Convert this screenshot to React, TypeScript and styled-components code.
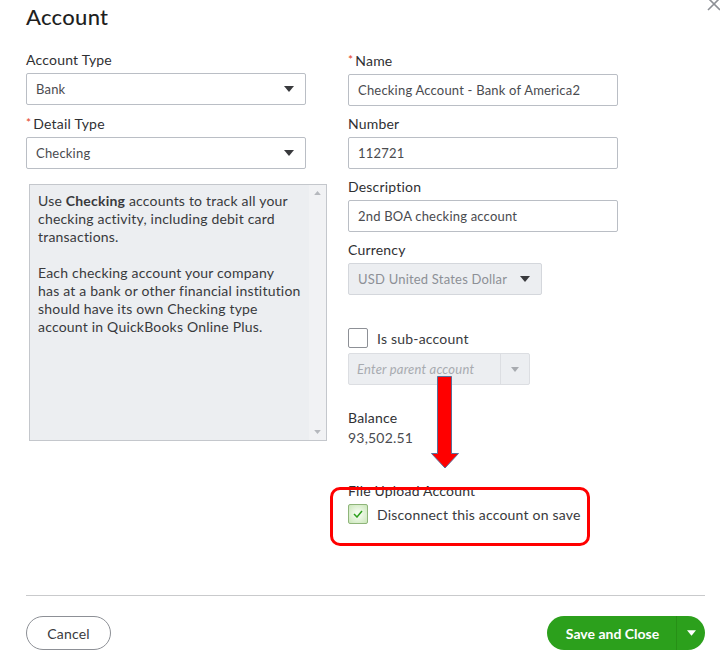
import React from 'react';
import styled, { createGlobalStyle } from 'styled-components';

const GlobalStyle = createGlobalStyle`
  html, body {
    margin: 0;
    padding: 0;
    background: #fff;
  }
  body {
    font-family: Lato, "Open Sans", sans-serif;
    color: #393a3d;
    letter-spacing: 0.2px;
  }
`;

const Caret = ({ color = '#393a3d' }: { color?: string }) => (
  <svg width="10" height="6" viewBox="0 0 10 6">
    <path d="M0 0h10L5 6z" fill={color} />
  </svg>
);

export default function App() {
  return (
    <Dialog>
      <GlobalStyle />
      <Header>
        <Title>Account</Title>
        <CloseButton aria-label="Close">
          <svg width="14" height="14" viewBox="0 0 14 14">
            <path d="M1 1l12 12M13 1L1 13" stroke="#8d9096" strokeWidth="1.6" />
          </svg>
        </CloseButton>
      </Header>

      <Body>
        <Column>
          <Field>
            <Label>Account Type</Label>
            <Select $width={280}>
              <span>Bank</span>
              <Caret />
            </Select>
          </Field>
          <Field>
            <Label>
              <Required>*</Required>Detail Type
            </Label>
            <Select $width={280}>
              <span>Checking</span>
              <Caret />
            </Select>
          </Field>
          <HelpBox>
            <HelpText>
              <p>
                Use <b>Checking</b> accounts to track all your
                <br />
                checking activity, including debit card
                <br />
                transactions.
              </p>
              <p>
                Each checking account your company
                <br />
                has at a bank or other financial institution
                <br />
                should have its own Checking type
                <br />
                account in QuickBooks Online Plus.
              </p>
            </HelpText>
            <ScrollTrack>
              <Caret color="#b5b8bd" />
              <Caret color="#b5b8bd" />
            </ScrollTrack>
          </HelpBox>
        </Column>

        <Column>
          <Field>
            <Label>
              <Required>*</Required>Name
            </Label>
            <TextInput $width={270}>Checking Account - Bank of America2</TextInput>
          </Field>
          <Field>
            <Label>Number</Label>
            <TextInput $width={270}>112721</TextInput>
          </Field>
          <Field>
            <Label>Description</Label>
            <TextInput $width={270}>2nd BOA checking account</TextInput>
          </Field>
          <Field>
            <Label>Currency</Label>
            <Select $width={194} $disabled>
              <span>USD United States Dollar</span>
              <Caret />
            </Select>
          </Field>

          <CheckRow $top={24}>
            <Checkbox />
            <CheckText>Is sub-account</CheckText>
          </CheckRow>
          <Combo>
            <Placeholder>Enter parent account</Placeholder>
            <ComboToggle>
              <Caret color="#a8abb0" />
            </ComboToggle>
          </Combo>

          <Label $top={24}>Balance</Label>
          <Value>93,502.51</Value>

          <Label $top={35}>File Upload Account</Label>
          <CheckRow $top={4}>
            <Checkbox $checked>
              <svg width="10" height="8" viewBox="0 0 10 8">
                <path d="M1 4l3 3 5-6" stroke="#2ca01c" strokeWidth="1.5" fill="none" />
              </svg>
            </Checkbox>
            <CheckText>Disconnect this account on save</CheckText>
          </CheckRow>
        </Column>
      </Body>

      <Footer>
        <Divider />
        <Actions>
          <CancelButton>Cancel</CancelButton>
          <SplitButton>
            <SplitMain>Save and Close</SplitMain>
            <SplitToggle>
              <Caret color="#fff" />
            </SplitToggle>
          </SplitButton>
        </Actions>
      </Footer>

      <Arrow width="28" height="93" viewBox="0 0 28 93">
        <path d="M6.5 0.5h14v77h7l-13.5 14.5L0.5 77.5h6z" fill="#ff0000" stroke="#5a6f99" strokeWidth="1" />
      </Arrow>
      <Highlight />
    </Dialog>
  );
}

const Dialog = styled.div`
  position: relative;
  width: 720px;
  height: 661px;
  box-sizing: border-box;
  padding: 0 15px 11px 26px;
  display: flex;
  flex-direction: column;
  overflow: hidden;
  background: #fff;
`;

const Header = styled.div`
  display: flex;
  justify-content: space-between;
  align-items: flex-start;
  height: 51px;
`;

const Title = styled.h1`
  margin: 3px 0 0;
  font-size: 22px;
  line-height: 28px;
  font-weight: 500;
  letter-spacing: 0.3px;
  color: #1f1f1f;
`;

const CloseButton = styled.div`
  margin: -5px -16px 0 0;
  width: 14px;
  height: 14px;
`;

const Body = styled.div`
  flex: 1;
  display: grid;
  grid-template-columns: 301px 270px;
  column-gap: 21px;
  align-items: start;
`;

const Column = styled.div`
  display: flex;
  flex-direction: column;
  align-items: flex-start;
`;

const Field = styled.div`
  display: flex;
  flex-direction: column;
  gap: 4px;
  margin-bottom: 9px;
`;

const Label = styled.div<{ $top?: number }>`
  margin-top: ${(p) => p.$top ?? 0}px;
  font-size: 14px;
  line-height: 18px;
  font-weight: 400;
  color: #2f3033;
`;

const Required = styled.span`
  color: #e4411b;
  font-size: 12px;
  margin-right: 2px;
  vertical-align: 2px;
`;

const BaseBox = styled.div<{ $width: number }>`
  width: ${(p) => p.$width}px;
  height: 32px;
  box-sizing: border-box;
  border: 1px solid #babec5;
  border-radius: 2px;
  padding: 0 9px;
  display: flex;
  align-items: center;
  font-size: 13px;
  color: #4a4b4f;
  background: #fff;
`;

const TextInput = styled(BaseBox)``;

const Select = styled(BaseBox)<{ $disabled?: boolean }>`
  justify-content: space-between;
  padding-right: 11px;
  background: ${(p) => (p.$disabled ? '#eceef1' : '#fff')};
  border-color: ${(p) => (p.$disabled ? '#d4d7dc' : '#babec5')};
  color: ${(p) => (p.$disabled ? '#8d9096' : '#4a4b4f')};
`;

const HelpBox = styled.div`
  margin: 6px 0 0 3px;
  width: 298px;
  height: 257px;
  box-sizing: border-box;
  border: 1px solid #c4c7cc;
  background: #eceef1;
  display: flex;
`;

const HelpText = styled.div`
  flex: 1;
  padding: 7px 0 0 8px;
  font-size: 14px;
  line-height: 18px;
  white-space: nowrap;
  color: #393a3d;

  p {
    margin: 0 0 18px;
  }
  b {
    font-weight: 700;
  }
`;

const ScrollTrack = styled.div`
  width: 17px;
  background: #f1f2f4;
  display: flex;
  flex-direction: column;
  justify-content: space-between;
  align-items: center;
  padding: 6px 0;

  svg {
    width: 7px;
    height: 4px;
  }
  svg:first-child {
    transform: rotate(180deg);
  }
`;

const CheckRow = styled.div<{ $top: number }>`
  margin-top: ${(p) => p.$top}px;
  display: flex;
  align-items: center;
  gap: 9px;
`;

const Checkbox = styled.div<{ $checked?: boolean }>`
  width: 20px;
  height: 20px;
  box-sizing: border-box;
  border-radius: 2px;
  border: 1px solid ${(p) => (p.$checked ? '#8fb57a' : '#8d9096')};
  background: ${(p) =>
    p.$checked ? 'radial-gradient(circle, #f2faed 20%, #c9e6b8 100%)' : '#fff'};
  display: flex;
  align-items: center;
  justify-content: center;
`;

const CheckText = styled.span`
  font-size: 14px;
  color: #393a3d;
`;

const Combo = styled.div`
  margin-top: 5px;
  width: 182px;
  height: 32px;
  box-sizing: border-box;
  border: 1px solid #dcdee2;
  border-radius: 2px;
  background: #eceef1;
  display: flex;
`;

const Placeholder = styled.span`
  flex: 1;
  padding-left: 8px;
  display: flex;
  align-items: center;
  font-size: 13px;
  font-style: italic;
  color: #a8abb0;
`;

const ComboToggle = styled.div`
  width: 28px;
  border-left: 1px solid #dcdee2;
  display: flex;
  align-items: center;
  justify-content: center;

  svg {
    width: 8px;
    height: 5px;
  }
`;

const Value = styled.div`
  margin-top: 2px;
  font-size: 14px;
  line-height: 18px;
  color: #4a4b4f;
`;

const Footer = styled.div`
  display: flex;
  flex-direction: column;
`;

const Divider = styled.div`
  height: 1px;
  background: #c9cacc;
`;

const Actions = styled.div`
  margin-top: 20px;
  display: flex;
  justify-content: space-between;
  align-items: center;
`;

const CancelButton = styled.button`
  width: 85px;
  height: 34px;
  border: 1px solid #8d9096;
  border-radius: 17px;
  background: #fff;
  font-family: Lato, sans-serif;
  font-size: 14px;
  letter-spacing: 0.2px;
  color: #393a3d;
`;

const SplitButton = styled.div`
  width: 158px;
  height: 34px;
  border-radius: 17px;
  background: #2ca01c;
  display: flex;
  overflow: hidden;
`;

const SplitMain = styled.div`
  flex: 1;
  display: flex;
  align-items: center;
  justify-content: center;
  padding-left: 2px;
  font-size: 14px;
  font-weight: 700;
  letter-spacing: 0;
  color: #fff;
  border-right: 1px solid #279016;
`;

const SplitToggle = styled.div`
  width: 28px;
  display: flex;
  align-items: center;
  justify-content: center;

  svg {
    width: 9px;
    height: 6px;
  }
`;

const Arrow = styled.svg`
  position: absolute;
  left: 431px;
  top: 376px;
`;

const Highlight = styled.div`
  position: absolute;
  left: 330px;
  top: 487px;
  width: 260px;
  height: 59px;
  box-sizing: border-box;
  border: 3px solid #ff0000;
  border-radius: 10px;
`;
